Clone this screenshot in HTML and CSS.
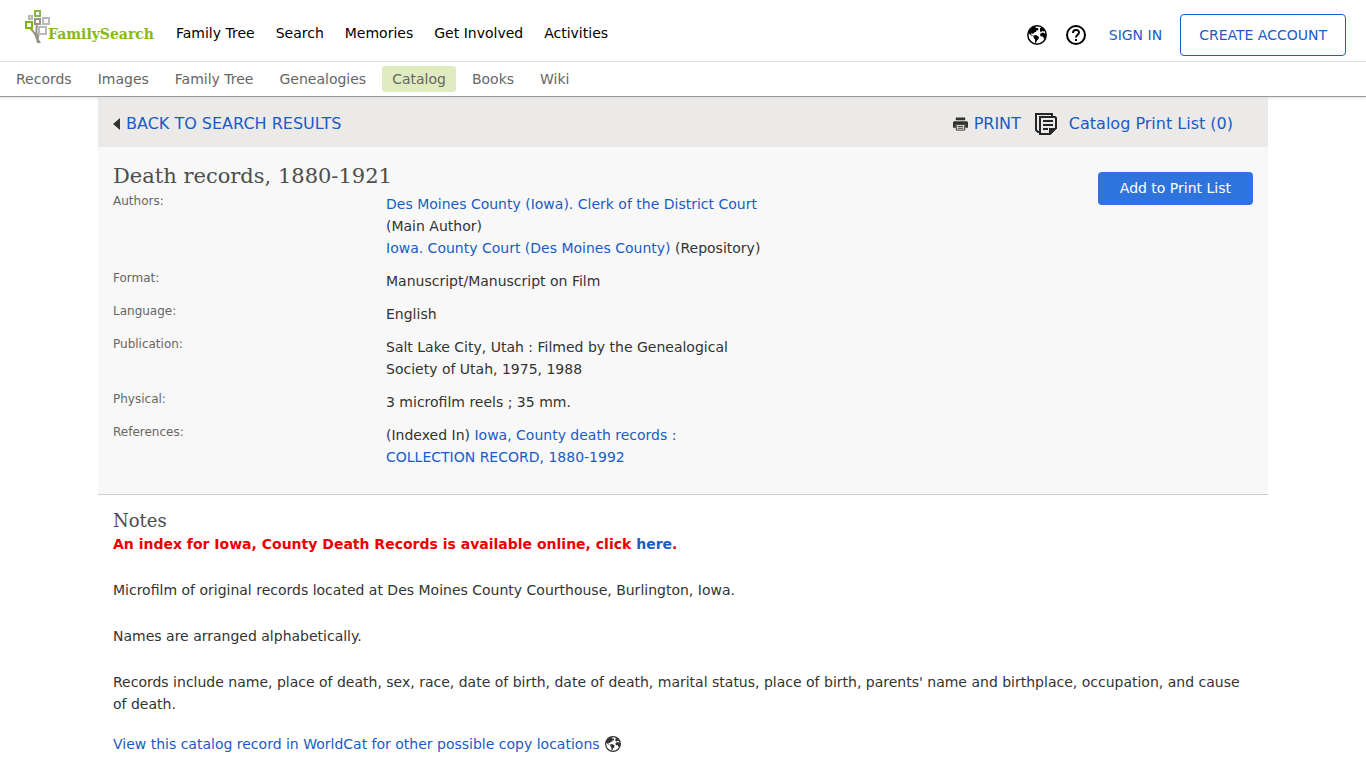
FILE: index.html
```html
<!DOCTYPE html>
<html lang="en">
<head>
    <meta charset="utf-8">
    <meta name="viewport" content="width=device-width, initial-scale=1">
    <title>Death records, 1880-1921 - FamilySearch</title>
    <link rel="stylesheet" href="styles.css">
</head>

<body>
    <svg class="symbols" aria-hidden="true">
        <symbol id="globe" viewBox="0 0 20 20">
            <circle cx="10" cy="10" r="9.200" fill="#fff" stroke="currentColor" stroke-width="1.500" />
            <path fill="currentColor" d="M1 8 2.500 4 6 1.500 9 1 8.500 3 11 3 11.500 5 9.500 5.500 9 7 7 7.500 6 9 4.500 8 4 9.500 6 10.500 5 11 3 9.500z" />
            <path fill="currentColor" d="M6.500 10.500 9 10 12 12 11.500 14 10 15.500 9 18 8 17.500 8 14.500 6.500 12.500z" />
            <path fill="currentColor" d="M13 3 15.500 2.500 18 5 17 6.500 15 6 14 7.500 13 6z" />
            <path fill="currentColor" d="M13.500 8.500 16 7.500 19 9 18.500 13 17 14 16 11.500 14 11.500 13 10z" />
        </symbol>
    </svg>

    <header>
        <div class="topbar">
            <a class="logo" href="#" aria-label="FamilySearch">
                <svg width="28" height="36" viewBox="0 0 28 36" fill="none">
                    <path d="M15 35C12 28 12 25 5 19M14 31C11 25 13 19 13 14M14 30C13 26 16 25 19 22" stroke="#9a9285" stroke-width="2" />
                    <path d="M10 24L13 25 14 30 17 35H13z" fill="#9a9285" />
                    <rect x="11" y="3" width="5" height="5" stroke="#87b940" stroke-width="2" />
                    <rect x="5" y="8" width="3" height="3" stroke="#b9b9b9" stroke-width="2" />
                    <rect x="11" y="11" width="5" height="5" fill="#fff" stroke="#9a9285" stroke-width="2" />
                    <rect x="19" y="10" width="6" height="6" stroke="#b9b9b9" stroke-width="2" />
                    <rect x="2" y="14" width="6" height="6" fill="#fff" stroke="#7bb800" stroke-width="2" />
                    <rect x="15" y="19" width="7" height="7" fill="#fff" stroke="#b9b9b9" stroke-width="2" />
                </svg>
                <span>FamilySearch</span>
            </a>
            <nav class="main-nav">
                <a href="#">Family Tree</a>
                <a href="#">Search</a>
                <a href="#">Memories</a>
                <a href="#">Get Involved</a>
                <a href="#">Activities</a>
            </nav>
            <div class="account">
                <button class="icon-btn" type="button" aria-label="Language">
                    <svg width="20" height="20"><use href="#globe" /></svg>
                </button>
                <button class="icon-btn" type="button" aria-label="Help">
                    <svg width="20" height="20" viewBox="0 0 20 20" fill="none" stroke="#000" stroke-width="2">
                        <circle cx="10" cy="10" r="9" />
                        <path d="M7 8C7 4 13 4 13 7.500C13 10 10 9.500 10 12.500M10 14V16" />
                    </svg>
                </button>
                <a class="sign-in" href="#">SIGN IN</a>
                <a class="create" href="#">CREATE ACCOUNT</a>
            </div>
        </div>
        <nav class="sub-nav">
            <a href="#">Records</a>
            <a href="#">Images</a>
            <a href="#">Family Tree</a>
            <a href="#">Genealogies</a>
            <a class="active" href="#">Catalog</a>
            <a href="#">Books</a>
            <a href="#">Wiki</a>
        </nav>
    </header>

    <main class="container">
        <div class="toolbar">
            <a class="back" href="#">
                <svg width="7" height="12" viewBox="0 0 7 12"><path d="M7 0V12L0 6z" fill="#333331" /></svg>
                BACK TO SEARCH RESULTS
            </a>
            <div class="tools">
                <a class="print" href="#">
                    <svg width="15" height="14" viewBox="0 0 16 14">
                        <path fill="#333331" d="M3 0H13V3H3zM1 4H15L16 5V11H13V7H3V11H0V5z" />
                        <path fill="none" stroke="#333331" d="M3.500 7.500H12.500V13.500H3.500zM5 9.500H11M5 11.500H11" />
                    </svg>
                    PRINT
                </a>
                <a class="print-list" href="#">
                    <svg width="22" height="22" viewBox="0 0 22 22" fill="none" stroke="#262626" stroke-width="2">
                        <path d="M17 4V1H1V17L3 19H5" />
                        <path d="M5 4H20L21 5V15L15 21H5z" />
                        <path d="M8 8H18M8 12H18M8 16H13" />
                        <path d="M14 22V15H22z" fill="#262626" stroke="none" />
                    </svg>
                    Catalog Print List (0)
                </a>
            </div>
        </div>

        <section class="record">
            <div class="details">
                <h1>Death records, 1880-1921</h1>
                <dl>
                    <dt>Authors:</dt>
                    <dd>
                        <a href="#">Des Moines County (Iowa). Clerk of the District Court</a> (Main Author)<br>
                        <a href="#">Iowa. County Court (Des Moines County)</a> (Repository)
                    </dd>
                    <dt>Format:</dt>
                    <dd>Manuscript/Manuscript on Film</dd>
                    <dt>Language:</dt>
                    <dd>English</dd>
                    <dt>Publication:</dt>
                    <dd>Salt Lake City, Utah : Filmed by the Genealogical Society of Utah, 1975, 1988</dd>
                    <dt>Physical:</dt>
                    <dd>3 microfilm reels ; 35 mm.</dd>
                    <dt>References:</dt>
                    <dd>(Indexed In) <a href="#">Iowa, County death records :<br>COLLECTION RECORD, 1880-1992</a></dd>
                </dl>
            </div>
            <button class="add-btn" type="button">Add to Print List</button>
        </section>

        <section class="notes">
            <h2>Notes</h2>
            <p class="alert">An index for Iowa, County Death Records is available online, click <a href="#">here</a>.</p>
            <p>Microfilm of original records located at Des Moines County Courthouse, Burlington, Iowa.</p>
            <p>Names are arranged alphabetically.</p>
            <p>Records include name, place of death, sex, race, date of birth, date of death, marital status, place of birth, parents' name and birthplace, occupation, and cause of death.</p>
            <a class="worldcat" href="#">
                View this catalog record in WorldCat for other possible copy locations
                <svg width="16" height="16"><use href="#globe" /></svg>
            </a>
        </section>
    </main>
</body>
</html>
```
FILE: styles.css
```css
* {
    box-sizing: border-box;
}

body {
    margin: 0;
    background: #fff;
    color: #333331;
    font-family: Verdana, "DejaVu Sans", sans-serif;
    font-size: 14px;
    line-height: 22px;
}

a {
    color: #1a5bc4;
    text-decoration: none;
}

h1, h2 {
    margin: 0;
    color: #4d4d4b;
    font-family: "DejaVu Serif", serif;
    font-weight: normal;
}

.symbols {
    display: none;
}

/* Header */
header {
    border-bottom: 1px solid #999;
    box-shadow: 0 1px 2px #ddd;
    position: relative;
}

.topbar {
    display: flex;
    align-items: center;
    height: 62px;
    padding: 0 20px 0 24px;
    border-bottom: 1px solid #e0e0dd;
}

.logo {
    display: flex;
    align-items: flex-end;
    width: 132px;
    height: 36px;
    margin-bottom: 10px;
    color: #87b914;
    font-family: "DejaVu Serif", serif;
    font-size: 14px;
    font-weight: bold;
    line-height: 20px;
}

.logo svg {
    flex: none;
    margin-right: -4px;
}

.main-nav {
    display: flex;
    gap: 21px;
    margin-left: 20px;
    padding-top: 4px;
}

.main-nav a {
    color: #000;
}

.account {
    display: flex;
    align-items: center;
    margin-left: auto;
    padding-top: 8px;
}

.icon-btn {
    display: flex;
    margin-right: 19px;
    padding: 0;
    border: 0;
    background: none;
    color: #000;
}

.sign-in {
    margin: 0 18px 0 4px;
}

.create {
    padding: 9px 18px;
    border: 1px solid #1a5bc4;
    border-radius: 4px;
}

.sub-nav {
    display: flex;
    align-items: center;
    gap: 6px;
    height: 34px;
    padding: 0 6px;
}

.sub-nav a {
    padding: 2px 10px;
    border-radius: 3px;
    color: #666664;
}

.sub-nav .active {
    background: #e0ebbf;
}

/* Catalog entry */
.container {
    max-width: 1170px;
    margin: 0 auto;
}

.toolbar {
    display: flex;
    justify-content: space-between;
    align-items: center;
    height: 50px;
    padding: 3px 35px 0 15px;
    background: #ebeae8;
    font-size: 16px;
}

.tools, .back, .print, .print-list {
    display: flex;
    align-items: center;
}

.back, .print {
    gap: 6px;
}

.tools {
    gap: 14px;
}

.print-list {
    gap: 12px;
}

.record {
    display: flex;
    justify-content: space-between;
    align-items: flex-start;
    padding: 14px 15px 26px;
    border-bottom: 1px solid #ccc;
    background: #f8f8f8;
}

.record h1 {
    font-size: 21px;
    line-height: 30px;
}

dl {
    display: grid;
    grid-template-columns: 273px 390px;
    row-gap: 11px;
    margin: 2px 0 0;
}

dt {
    color: #666664;
    font-size: 12px;
    line-height: 16px;
}

dd {
    margin: 0;
}

.add-btn {
    margin-top: 11px;
    padding: 5px 22px 6px;
    border: 0;
    border-radius: 4px;
    background: #2f73dd;
    color: #fff;
    font: inherit;
}

.notes {
    padding: 14px 15px 10px;
}

.notes h2 {
    font-size: 18px;
    line-height: 24px;
}

.notes p {
    margin: 0 0 24px;
}

.notes .alert {
    color: #ea0000;
    font-weight: bold;
}

.worldcat {
    display: flex;
    align-items: center;
    gap: 5px;
    margin-top: -6px;
}

.worldcat svg {
    color: #333331;
}
```
